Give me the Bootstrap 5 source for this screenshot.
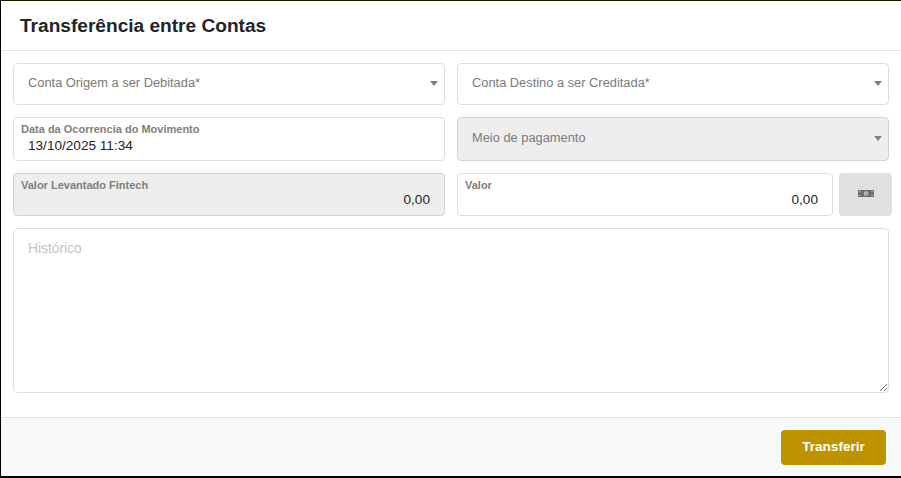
<!DOCTYPE html>
<html lang="pt">
<head>
<meta charset="utf-8">
<title>Transferência entre Contas</title>
<link href="https://cdn.jsdelivr.net/npm/bootstrap@5.3.0/dist/css/bootstrap.min.css" rel="stylesheet">
<style>
html,body{height:478px;overflow:hidden;background:#fff;}
body{font-family:"Liberation Sans",Arial,sans-serif;font-size:13.6px;color:#212529;}
.shell{height:478px;border-left:1px solid #000;border-top:1px solid #1c1600;border-bottom:2px solid #000;display:flex;flex-direction:column;}
.shell-head{height:50px;padding:0 19px;border-bottom:1px solid #dee2e6;display:flex;align-items:center;}
.shell-head h5{font-size:19.1px;font-weight:700;margin:0;line-height:1;color:#212529;}
.shell-body{flex:1 1 auto;padding:12px 12px 0 12px;display:flex;flex-direction:column;gap:12px;}
.line{display:flex;gap:12px;}
.cell{flex:0 0 432px;width:432px;}
.fld{border:1px solid #dedede;border-radius:4px;background:#fff;position:relative;padding:0 14px;color:#212529;}
.fld.off{background:#eee;border-color:#d3d3d3;}
.sel{height:42px;display:flex;align-items:center;color:#7a7a7a;font-size:12.85px;padding-bottom:2px;}
.sel.tall{height:44px;padding-bottom:3px;}
.caret{position:absolute;right:6px;top:50%;margin-top:-3px;width:0;height:0;border-left:4px solid transparent;border-right:4px solid transparent;border-top:5px solid #808080;}
.lab{font-size:11px;font-weight:700;color:#7f7f7a;line-height:12px;margin-left:-7px;display:block;}
.dt{height:44px;padding-top:5px;}
.dt .val{line-height:16px;margin-top:3px;}
.num{height:43px;padding-top:5px;}
.num .val{line-height:16px;margin-top:1px;text-align:right;}
.val2{width:376px;flex:0 0 376px;}
.money{width:53px;height:43px;margin-left:6px;flex:0 0 53px;background:#e0e0e0;border:0;border-radius:4px;padding:0 0 3px;display:flex;align-items:center;justify-content:center;}
.pair{display:flex;flex:0 0 432px;width:432px;}
.hist{display:block;width:876px;height:165px;border:1px solid #dedede;border-radius:4px;padding:10px 14px;color:#212529;font-size:13.8px;font-family:inherit;outline:0;}
.hist::placeholder{color:#c4c4c4;opacity:1;}
.shell-foot{height:59px;flex:0 0 59px;background:#f8f9fa;border-top:1px solid #dee2e6;padding:12px 15px 0 0;display:flex;justify-content:flex-end;align-items:flex-start;}
.go{width:105px;height:35px;background:#bd9400;border:0;border-radius:4px;color:#fff;font-size:13.6px;font-weight:700;padding:0;}
.go:hover{background:#bd9400;color:#fff;}
</style>
</head>
<body>
<div class="shell">
  <div class="shell-head"><h5>Transferência entre Contas</h5></div>
  <div class="shell-body">
    <div class="line">
      <div class="cell"><div class="fld sel">Conta Origem a ser Debitada*<span class="caret"></span></div></div>
      <div class="cell"><div class="fld sel">Conta Destino a ser Creditada*<span class="caret"></span></div></div>
    </div>
    <div class="line">
      <div class="cell"><div class="fld dt"><span class="lab">Data da Ocorrencia do Movimento</span><div class="val">13/10/2025 11:34</div></div></div>
      <div class="cell"><div class="fld off sel tall">Meio de pagamento<span class="caret"></span></div></div>
    </div>
    <div class="line">
      <div class="cell"><div class="fld off num"><span class="lab">Valor Levantado Fintech</span><div class="val">0,00</div></div></div>
      <div class="pair">
        <div class="fld num val2"><span class="lab">Valor</span><div class="val">0,00</div></div>
        <button class="money" type="button" aria-label="Dinheiro">
          <svg width="16" height="7" viewBox="0 0 16 7"><rect width="16" height="7" fill="#6e6e6e"/><circle cx="8" cy="3.5" r="2.2" fill="#c8c8c8"/><circle cx="8" cy="3.5" r=".8" fill="#6e6e6e"/><rect x="1" y="1" width="1.5" height="1.2" fill="#bbb"/><rect x="13.5" y="1" width="1.5" height="1.2" fill="#bbb"/><rect x="1" y="4.8" width="1.5" height="1.2" fill="#bbb"/><rect x="13.5" y="4.8" width="1.5" height="1.2" fill="#bbb"/></svg>
        </button>
      </div>
    </div>
    <textarea class="hist" placeholder="Histórico"></textarea>
  </div>
  <div class="shell-foot"><button class="btn go" type="button">Transferir</button></div>
</div>
</body>
</html>
